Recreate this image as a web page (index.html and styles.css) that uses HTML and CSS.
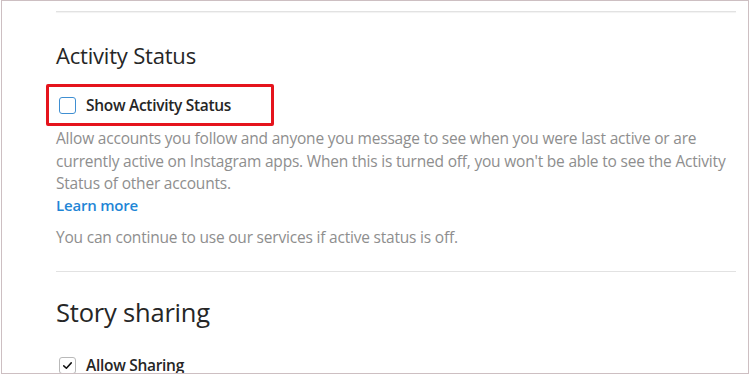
FILE: index.html
```html
<!DOCTYPE html>
<html lang="en">
<head>
<meta charset="utf-8">
<title>Activity Status</title>
<link rel="stylesheet" href="styles.css">
</head>
<body>
<div class="frame">
  <div class="content">
    <hr class="divider divider-top">
    <section class="section">
      <h2 class="section-title">Activity Status</h2>
      <label class="option option-highlight">
        <span class="checkbox"></span>
        <span class="option-label">Show Activity Status</span>
        <span class="highlight-box"></span>
      </label>
      <p class="help">Allow accounts you follow and anyone you message to see when you were last active or are currently active on Instagram apps. When this is turned off, you won't be able to see the Activity Status of other accounts.</p>
      <a class="learn-more" href="#">Learn more</a>
      <p class="help help-note">You can continue to use our services if active status is off.</p>
    </section>
    <hr class="divider">
    <section class="section">
      <h2 class="section-title title-story">Story sharing</h2>
      <label class="option option-second">
        <span class="checkbox checkbox-checked">
          <svg viewBox="0 0 16 16" width="16" height="16"><path d="M4 8.4 L6.8 11 L12 5.2" fill="none" stroke="#111" stroke-width="1.6" stroke-linecap="round" stroke-linejoin="round"/></svg>
        </span>
        <span class="option-label">Allow Sharing</span>
      </label>
    </section>
  </div>
</div>
</body>
</html>
```
FILE: styles.css
```css
html, body {
  margin: 0;
  padding: 0;
  background: #ffffff;
  overflow: hidden;
}
body {
  width: 750px;
  height: 375px;
  font-family: "Open Sans", "Noto Sans", sans-serif;
}
.frame {
  margin-left: 1px;
  width: 746px;
  height: 372px;
  border: 1px solid #cdbfc2;
  overflow: hidden;
  background: #fff;
}
.content {
  padding-left: 54px;
  width: 680px;
}
.divider {
  border: 0;
  height: 1px;
  background: #e2e2e2;
  margin: 0;
}
.divider-top {
  margin-top: 10px;
  box-shadow: 0 1px 1px #f0f0f0;
}
.section-title {
  margin: 0;
  font-weight: 400;
  font-size: 22px;
  line-height: 30px;
  color: #262626;
  letter-spacing: -0.2px;
}
.section:first-of-type .section-title {
  margin-top: 28px;
}
.option {
  display: flex;
  align-items: center;
  position: relative;
  margin-top: 23px;
  height: 24px;
}
.checkbox {
  box-sizing: border-box;
  width: 17px;
  height: 17px;
  border: 1.5px solid #3f8fd2;
  border-radius: 3px;
  margin-left: 3px;
  flex: none;
  display: flex;
  align-items: center;
  justify-content: center;
}
.checkbox-checked {
  border-color: #b9b9b9;
}
.checkbox-checked svg {
  width: 15px;
  height: 15px;
}
.option-label {
  margin-left: 10px;
  font-size: 15.5px;
  font-weight: 600;
  color: #262626;
  letter-spacing: -0.3px;
}
.highlight-box {
  position: absolute;
  box-sizing: border-box;
  left: -10px;
  top: -9px;
  width: 228px;
  height: 42px;
  border: 3px solid #e5141c;
  border-radius: 2px;
}
.help {
  margin: 10px 0 0;
  font-size: 15.5px;
  line-height: 22.5px;
  color: #8e8e8e;
  letter-spacing: -0.2px;
}
.learn-more {
  display: block;
  font-size: 15px;
  line-height: 21px;
  font-weight: 600;
  color: #1f86d6;
  text-decoration: none;
  letter-spacing: -0.2px;
}
.help-note {
  margin-top: 10px;
  margin-bottom: 0;
  padding-bottom: 23px;
}
.title-story {
  margin-top: 25px;
  font-size: 25.5px;
}
.option-second {
  margin-top: 26px;
}
```
